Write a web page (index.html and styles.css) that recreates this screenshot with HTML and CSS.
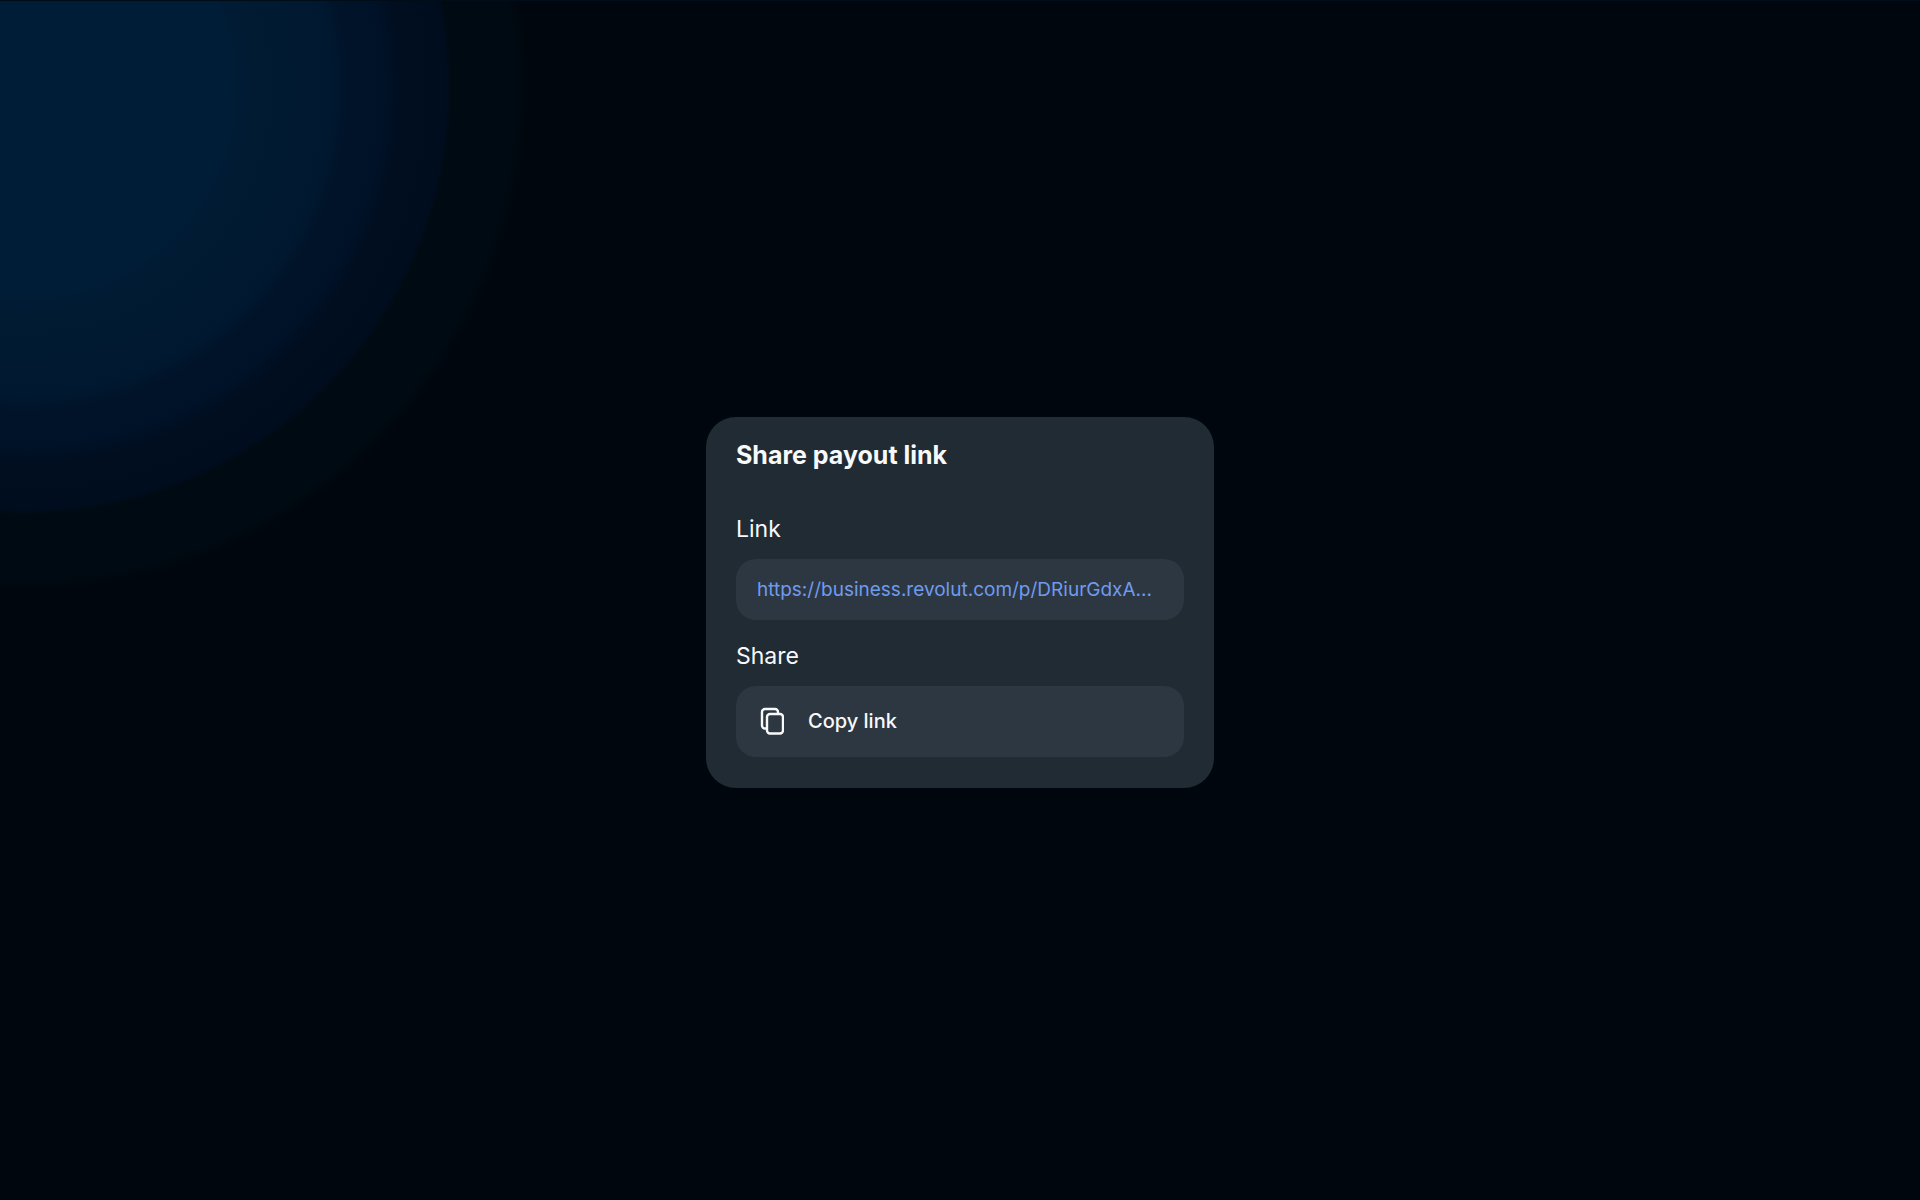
FILE: index.html
```html
<!DOCTYPE html>
<html lang="en">
<head>
  <meta charset="UTF-8">
  <meta name="viewport" content="width=device-width, initial-scale=1.0">
  <title>Share payout link</title>
  <link rel="stylesheet" href="styles.css">
</head>
<body>

<main class="card">
  <h1>Share payout link</h1>

  <h2>Link</h2>
  <a class="payout-link" href="https://business.revolut.com/p/DRiurGdxA">https://business.revolut.com/p/DRiurGdxA...</a>

  <h2>Share</h2>
  <button class="copy" type="button">
    <svg class="copy-icon" viewBox="0 0 24 28" aria-hidden="true">
      <path d="M6 21.500H5A3 3 0 0 1 2 18.500V5A3 3 0 0 1 5 2H15A3 3 0 0 1 18 5V6"/>
      <rect x="7" y="7" width="16" height="19.500" rx="3"/>
    </svg>
    Copy link
  </button>
</main>

</body>
</html>
```

FILE: styles.css
```css
* {
  box-sizing: border-box;
}
body {
  margin: 0;
  min-height: 100vh;
  padding-top: 3px;
  display: flex;
  justify-content: center;
  align-items: center;
  font-family: Inter, "Liberation Sans", sans-serif;
  color: #f7f9fb;
  border-top: 1px solid #000c17;
  background-color: #00060d;
  /* glow in the top left corner */
  background-image: radial-gradient(circle at 24px 87px,
    #001d37 208px, #001b33 222px,
    #001930 308px, #001329 324px,
    #001228 360px, #000e20 376px,
    #000d1e 422px, #000a13 428px,
    #000a12 492px, #00060d 504px);
}
.card {
  width: 508px;
  max-width: 100%;
  padding: 20px 30px 31px;
  border-radius: 30px;
  background-color: #212b34;
}
h1 {
  margin: 0 0 42px;
  font-size: 25px;
  line-height: 36px;
  font-weight: 700;
}
h2 {
  margin: 0 0 16px;
  font-size: 23px;
  line-height: 28px;
  font-weight: 400;
}
.payout-link,
.copy {
  border-radius: 20px;
  background-color: #2d3741;
}
.payout-link {
  display: block;
  margin-bottom: 22px;
  padding: 0 21px;
  font-size: 19px;
  line-height: 61px;
  color: #6f9bee;
  text-decoration: none;
  white-space: nowrap;
  overflow: hidden;
  text-overflow: ellipsis;
}
.copy {
  display: flex;
  align-items: center;
  gap: 24px;
  width: 100%;
  height: 71px;
  padding: 0 24px;
  border: none;
  color: inherit;
  font-family: inherit;
  font-size: 20px;
  font-weight: 500;
  cursor: pointer;
}
.copy-icon {
  width: 24px;
  height: 28px;
  fill: none;
  stroke: currentColor;
  stroke-width: 2.400;
}
```
